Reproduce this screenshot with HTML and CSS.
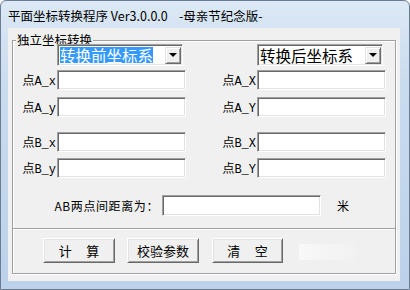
FILE: index.html
```html
<!DOCTYPE html>
<html lang="zh">
    <head>
        <meta charset="UTF-8">
        <title>平面坐标转换程序</title>
        <link rel="stylesheet" href="styles.css">
    </head>
    <body>
        <div class="window">
            <div class="titlebar">平面坐标转换程序 Ver3.0.0.0 &nbsp; &nbsp;-母亲节纪念版-</div>

            <div class="client">
                <div class="group">
                    <div class="caption">独立坐标转换</div>

                    <div class="combos">
                        <div class="combo">
                            <span class="combo-text selected">转换前坐标系</span>
                            <span class="combo-btn"></span>
                        </div>
                        <div class="combo">
                            <span class="combo-text">转换后坐标系</span>
                            <span class="combo-btn"></span>
                        </div>
                    </div>

                    <div class="row row-ax">
                        <label class="lbl">点A_x</label><input class="field" type="text">
                        <label class="lbl lbl-right">点A_X</label><input class="field" type="text">
                    </div>
                    <div class="row row-ay">
                        <label class="lbl">点A_y</label><input class="field" type="text">
                        <label class="lbl lbl-right">点A_Y</label><input class="field" type="text">
                    </div>
                    <div class="row row-bx">
                        <label class="lbl">点B_x</label><input class="field" type="text">
                        <label class="lbl lbl-right">点B_X</label><input class="field" type="text">
                    </div>
                    <div class="row row-by">
                        <label class="lbl">点B_y</label><input class="field" type="text">
                        <label class="lbl lbl-right">点B_Y</label><input class="field" type="text">
                    </div>

                    <div class="row row-dist">
                        <label class="lbl lbl-dist">AB两点间距离为：</label><input class="field field-dist" type="text">
                        <span class="unit">米</span>
                    </div>
                </div>

                <div class="buttons">
                    <button class="btn">计&nbsp;&nbsp;&nbsp;&nbsp;&nbsp;算</button>
                    <button class="btn">校验参数</button>
                    <button class="btn btn-last">清&nbsp;&nbsp;&nbsp;&nbsp;&nbsp;空</button>
                    <div class="ghost"></div>
                </div>
            </div>
        </div>
    </body>
</html>
```

FILE: styles.css
```css
* {
    box-sizing: border-box;
}

body {
    margin: 0;
    background: #fff;
    font-family: "Noto Sans CJK SC", sans-serif;
}

.window {
    width: 410px;
    height: 290px;
    display: flex;
    flex-direction: column;
    background: linear-gradient(#dce8f5, #c9dbef 30%, #bcd1ea);
    border: 1px solid #6b7d93;
    border-radius: 6px 6px 0 0;
    padding: 0 9px 8px 7px;
}

.titlebar {
    height: 27px;
    padding-top: 6px;
    font-size: 12.5px;
    line-height: 17px;
    color: #000;
    white-space: pre;
}

.client {
    flex: 1;
    background: #f0f0f0;
    padding: 12px 4px 0 4px;
}

/* group box */
.group {
    height: 189px;
    display: flex;
    flex-direction: column;
    border: 1px solid #a0a0a0;
    box-shadow: inset 1px 1px 0 #fff, 1px 1px 0 #fff;
}

.caption {
    align-self: flex-start;
    height: 13px;
    margin: -8px 0 -2px 3px;
    padding: 0 1px;
    background: #f0f0f0;
    font-size: 12.5px;
    line-height: 13px;
}

.combos {
    display: flex;
    gap: 74px;
    padding-left: 44px;
}

.combo {
    width: 126px;
    height: 22px;
    display: flex;
    align-items: center;
    padding: 1px;
    background: #fff;
    border: 1px solid;
    border-color: #a0a0a0 #fff #fff #a0a0a0;
    box-shadow: inset 1px 1px 0 #696969, inset -1px -1px 0 #e3e3e3;
}

.combo-text {
    margin-left: 1px;
    font-size: 15.5px;
    line-height: 16px;
    color: #000;
}

.combo-text.selected {
    background: #3399ff;
    color: #fff;
}

.combo-btn {
    margin-left: auto;
    width: 16px;
    height: 17px;
    display: flex;
    align-items: center;
    justify-content: center;
    background: #f0f0f0;
    border: 1px solid;
    border-color: #e3e3e3 #696969 #696969 #e3e3e3;
    box-shadow: inset 1px 1px 0 #fff, inset -1px -1px 0 #a0a0a0;
}

.combo-btn::after {
    content: "";
    border-left: 4px solid transparent;
    border-right: 4px solid transparent;
    border-top: 4px solid #000;
}

/* coordinate rows */
.row {
    display: flex;
    align-items: center;
    height: 20px;
}

.row-ax { margin-top: 4px; }
.row-ay { margin-top: 7px; }
.row-bx { margin-top: 15px; }
.row-by { margin-top: 6px; }

.row-dist {
    height: 21px;
    margin-top: 17px;
}

.lbl {
    width: 44px;
    padding-right: 1px;
    text-align: right;
    font-family: "Liberation Mono", "Noto Sans CJK SC", monospace;
    font-size: 12px;
    color: #000;
}

.lbl-right {
    width: 71px;
}

.lbl-dist {
    width: 149px;
    padding-right: 3px;
    font-family: "Noto Sans CJK SC", sans-serif;
    letter-spacing: 0.6px;
}

.field {
    width: 129px;
    height: 20px;
    margin: 0;
    padding: 0 2px;
    background: #fff;
    border: 1px solid;
    border-color: #a0a0a0 #fff #fff #a0a0a0;
    box-shadow: inset 1px 1px 0 #696969, inset -1px -1px 0 #e3e3e3;
    outline: none;
}

.field-dist {
    width: 159px;
    height: 21px;
}

.unit {
    margin-left: 16px;
    font-size: 12px;
}

/* button strip */
.buttons {
    height: 45px;
    display: flex;
    align-items: flex-start;
    gap: 12px;
    padding: 9px 0 0 30px;
    border: 1px solid #a0a0a0;
    border-top: 0;
    box-shadow: inset 1px 0 0 #fff, 1px 1px 0 #fff;
}

.btn {
    width: 72px;
    height: 25px;
    margin: 0;
    padding: 0;
    background: #f0f0f0;
    border: 1px solid;
    border-color: #fff #696969 #696969 #fff;
    box-shadow: inset 1px 1px 0 #e3e3e3, inset -1px -1px 0 #a0a0a0;
    font-family: "Noto Sans CJK SC", sans-serif;
    font-size: 13px;
    color: #000;
    white-space: pre;
}

.btn-last {
    margin-left: 1px;
    width: 71px;
}

.ghost {
    width: 56px;
    height: 16px;
    margin: 6px 0 0 4px;
    background: linear-gradient(to right, rgba(255, 255, 255, 0.55), rgba(255, 255, 255, 0.1));
}
```
